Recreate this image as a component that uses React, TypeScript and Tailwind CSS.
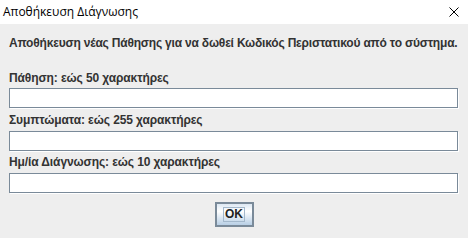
export default function App() {
  return (
    <div className="w-[468px] h-[238px] bg-[#eeeeee] flex flex-col overflow-hidden">
      <div className="h-[24px] bg-white flex items-center justify-between pl-[3px] pr-[9px] shrink-0">
        <span className="text-[12px] leading-[16px] text-black font-['Segoe_UI','Open_Sans','Noto_Sans',sans-serif]">
          Αποθήκευση Διάγνωσης
        </span>
        <svg width="10" height="10" viewBox="0 0 10 10" className="block">
          <path d="M0.5 0.5 L9.5 9.5 M9.5 0.5 L0.5 9.5" stroke="#000" strokeWidth="1" fill="none" />
        </svg>
      </div>
      <div className="flex flex-col px-[9px] font-['Liberation_Sans','Arial',sans-serif] text-[12px] leading-[15px] font-bold text-[#333333]">
        <div className="mt-[12px] whitespace-nowrap tracking-[-0.2px]">
          Αποθήκευση νέας Πάθησης για να δωθεί Κωδικός Περιστατικού από το σύστημα.
        </div>
        <div className="mt-[20px] tracking-[-0.1px]">Πάθηση: εώς 50 χαρακτήρες</div>
        <div className="mt-[2px] w-[449px] h-[20px] border border-[#7a8a99] bg-white shadow-[1px_1px_0_#ffffff]" />
        <div className="mt-[5px] tracking-[-0.1px]">Συμπτώματα: εώς 255 χαρακτήρες</div>
        <div className="mt-[3px] w-[449px] h-[20px] border border-[#7a8a99] bg-white shadow-[1px_1px_0_#ffffff]" />
        <div className="mt-[4px] tracking-[-0.1px]">Ημ/ία Διάγνωσης: εώς 10 χαρακτήρες</div>
        <div className="mt-[3px] w-[449px] h-[20px] border border-[#7a8a99] bg-white shadow-[1px_1px_0_#ffffff]" />
        <div className="flex justify-center mt-[9px]">
          <div className="w-[39px] h-[25px] border-2 border-[#7a8a99] bg-[linear-gradient(to_bottom,#dde8f3_0%,#ffffff_35%,#dde8f3_65%,#b8cfe5_100%)] flex items-center justify-center">
            <span className="border border-[#a3b8cc] px-[1px] leading-[13px] text-[12px] text-[#222222]">OK</span>
          </div>
        </div>
      </div>
    </div>
  );
}
